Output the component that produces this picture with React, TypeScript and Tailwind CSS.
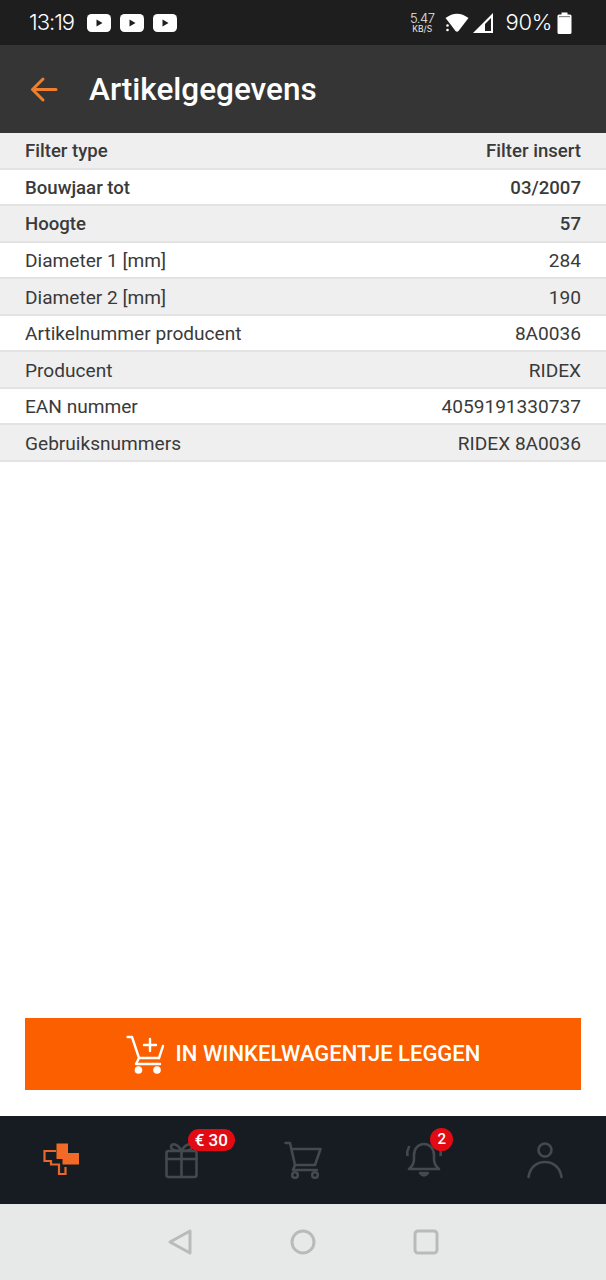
const rows: [string, string, boolean][] = [
  ["Filter type", "Filter insert", true],
  ["Bouwjaar tot", "03/2007", true],
  ["Hoogte", "57", true],
  ["Diameter 1 [mm]", "284", false],
  ["Diameter 2 [mm]", "190", false],
  ["Artikelnummer producent", "8A0036", false],
  ["Producent", "RIDEX", false],
  ["EAN nummer", "4059191330737", false],
  ["Gebruiksnummers", "RIDEX 8A0036", false],
];

function Yt() {
  return (
    <svg width="24" height="18" viewBox="0 0 24 18">
      <rect width="24" height="18" y="0" rx="4.5" fill="#fff" />
      <path d="M9.5 5.5 L15.5 9 L9.5 12.5 Z" fill="#1e1e1e" />
    </svg>
  );
}

export default function App() {
  return (
    <div className="w-[606px] h-[1280px] flex flex-col bg-white overflow-hidden font-['Roboto',sans-serif]">
      <div className="h-[45px] shrink-0 bg-[#1e1e1e] flex items-center pl-[29px] pr-[34px] text-white font-['Inter',sans-serif]">
        <span className="text-[22px] font-light tracking-[-1px] mr-[13px]">13:19</span>
        <div className="flex gap-[9px]">
          <Yt />
          <Yt />
          <Yt />
        </div>
        <div className="ml-auto flex items-center">
          <div className="flex flex-col items-center mr-[11px] text-[#e8e8e8]">
            <span className="text-[13px] font-light tracking-[-0.5px] leading-[13px]">5.47</span>
            <span className="text-[8.5px] leading-[9px]">KB/S</span>
          </div>
          <svg width="24" height="22" viewBox="0 0 24 22" className="mr-[3px]">
            <path d="M0.5 6 Q12 -2.5 23.5 6 L13.5 19 Q12 20.5 10.5 19 L6 13 Z" fill="#fff" />
            <circle cx="2.5" cy="13.5" r="1.3" fill="#fff" />
            <circle cx="2.5" cy="18" r="1.3" fill="#fff" />
          </svg>
          <svg width="22" height="22" viewBox="0 0 22 22" className="mr-[11px]">
            <path d="M21 1 V21 H1 Z M19 6 L13 12 V19 H19 Z" fill="#fff" fillRule="evenodd" />
          </svg>
          <span className="text-[22px] font-light mr-[5px] tracking-[-0.3px]">90%</span>
          <svg width="15" height="22" viewBox="0 0 15 22">
            <path d="M4.5 0.5 H10.5 V2.5 H13 Q14.5 2.5 14.5 4 V20.5 Q14.5 22 13 22 H2 Q0.5 22 0.5 20.5 V4 Q0.5 2.5 2 2.5 H4.5 Z" fill="#fff" />
            <rect x="2" y="4" width="11" height="1.2" fill="#8a8a8a" />
          </svg>
        </div>
      </div>

      <div className="h-[88px] shrink-0 bg-[#353535] flex items-center pl-[30px]">
        <svg width="28" height="29" viewBox="0 0 28 29" fill="none" stroke="#ee7f2d" strokeWidth="3" strokeLinecap="round" strokeLinejoin="round">
          <path d="M26 14.5 H2.5 M13 4 L2.5 14.5 L13 25" />
        </svg>
        <h1 className="ml-[31px] pt-[2px] text-[31.5px] font-medium text-white leading-none">Artikelgegevens</h1>
      </div>

      <div className="shrink-0 flex flex-col">
        {rows.map(([k, v, strong], i) => (
          <div
            key={k}
            className={`h-[36.5px] px-[25px] pt-[4px] flex items-center justify-between text-[#3a3a3a] border-b-2 border-[#e3e3e3] ${
              i % 2 === 0 ? "bg-[#efefef]" : "bg-white"
            } ${strong ? "font-medium text-[18.6px]" : "font-normal text-[19.1px]"}`}
          >
            <span>{k}</span>
            <span>{v}</span>
          </div>
        ))}
      </div>

      <div className="flex-1" />

      <div className="px-[25px] pb-[26px] shrink-0">
        <div className="h-[72px] bg-[#fb5f00] flex items-center justify-center text-white">
          <svg width="40" height="40" viewBox="0 0 40 40" fill="none" stroke="#fff" strokeWidth="2.4" strokeLinecap="round" strokeLinejoin="round" className="mr-[10px]">
            <path d="M1.5 3 H6 L13 24 H33 M8 9 L13 24 M13 24 L10 30 H34" />
            <path d="M37 12 L33 24" />
            <path d="M24 5 V17 M18 11 H30" />
            <circle cx="12.5" cy="36" r="2.6" fill="#fff" />
            <circle cx="31" cy="36" r="2.6" fill="#fff" />
          </svg>
          <span className="text-[22px] font-medium leading-none">IN WINKELWAGENTJE LEGGEN</span>
        </div>
      </div>

      <div className="h-[88px] shrink-0 bg-[#161c22] grid grid-cols-5 items-center">
        <div className="flex justify-center">
          <svg width="36" height="36" viewBox="0 0 36 36">
            <path d="M13.5 1.5 H25 V11 H36 V22.5 H19.5 V17 H13.5 Z" fill="#f26a25" />
            <path d="M13 9 H1.5 V19 H8 V22.5 H16 V32 H22.5 V25" fill="none" stroke="#e8672a" strokeWidth="2.2" />
          </svg>
        </div>
        <div className="flex justify-center">
          <div className="relative">
            <svg width="36" height="38" viewBox="0 0 36 38" fill="none" stroke="#43494e" strokeWidth="2.6" strokeLinejoin="round" strokeLinecap="round">
              <rect x="2.5" y="10" width="30" height="26" rx="2" />
              <path d="M2.5 18 H32.5 M17.5 10 V36" />
              <path d="M17.5 10 C14 3 7 1 7 6 C7 9 11 10 17.5 10 C24 10 28 9 28 6 C28 1 21 3 17.5 10" />
            </svg>
            <span className="absolute left-[24px] -top-[12px] h-[22px] w-[47px] rounded-full bg-[#e30b13] text-white text-[17px] font-medium flex items-center justify-center leading-none">€ 30</span>
          </div>
        </div>
        <div className="flex justify-center">
          <svg width="38" height="38" viewBox="0 0 38 38" fill="none" stroke="#43494e" strokeWidth="2.6" strokeLinecap="round" strokeLinejoin="round">
            <path d="M1.5 2 H6 L11 24 H31 L36.5 8 H8" />
            <path d="M11 24 L9 29 H33" />
            <circle cx="11" cy="34" r="2.8" />
            <circle cx="31" cy="34" r="2.8" />
          </svg>
        </div>
        <div className="flex justify-center">
          <div className="relative">
            <svg width="36" height="38" viewBox="0 0 36 38" fill="none" stroke="#43494e" strokeWidth="2.6" strokeLinecap="round" strokeLinejoin="round">
              <path d="M3 28 H33 Q28 24 28 18 V14 C28 8 24 3 18 3 C12 3 8 8 8 14 V18 Q8 24 3 28 Z" />
              <path d="M14 32 Q18 37 22 32 Z" fill="#43494e" />
              <path d="M3 6 Q0.5 11 1.5 14 M33 6 Q35.5 11 34.5 14" />
            </svg>
            <span className="absolute left-[24px] -top-[13px] h-[23px] w-[23px] rounded-full bg-[#e30b13] text-white text-[15px] font-medium flex items-center justify-center leading-none">2</span>
          </div>
        </div>
        <div className="flex justify-center">
          <svg width="36" height="38" viewBox="0 0 36 38" fill="none" stroke="#43494e" strokeWidth="2.6" strokeLinecap="round">
            <circle cx="18" cy="9" r="6.5" />
            <path d="M1.5 36 C3 26 10 21 18 21 C26 21 33 26 34.5 36" />
          </svg>
        </div>
      </div>

      <div className="h-[76px] shrink-0 bg-[#e7e9e8] flex items-center justify-center gap-[97px]">
        <svg width="26" height="28" viewBox="0 0 26 28" fill="none" stroke="#b9bbba" strokeWidth="3" strokeLinejoin="round">
          <path d="M23 3 V25 L3 14 Z" />
        </svg>
        <svg width="26" height="26" viewBox="0 0 26 26" fill="none" stroke="#b9bbba" strokeWidth="3">
          <circle cx="13" cy="13" r="11" />
        </svg>
        <svg width="26" height="26" viewBox="0 0 26 26" fill="none" stroke="#b9bbba" strokeWidth="3">
          <rect x="2" y="2" width="22" height="22" rx="3" />
        </svg>
      </div>
    </div>
  );
}
